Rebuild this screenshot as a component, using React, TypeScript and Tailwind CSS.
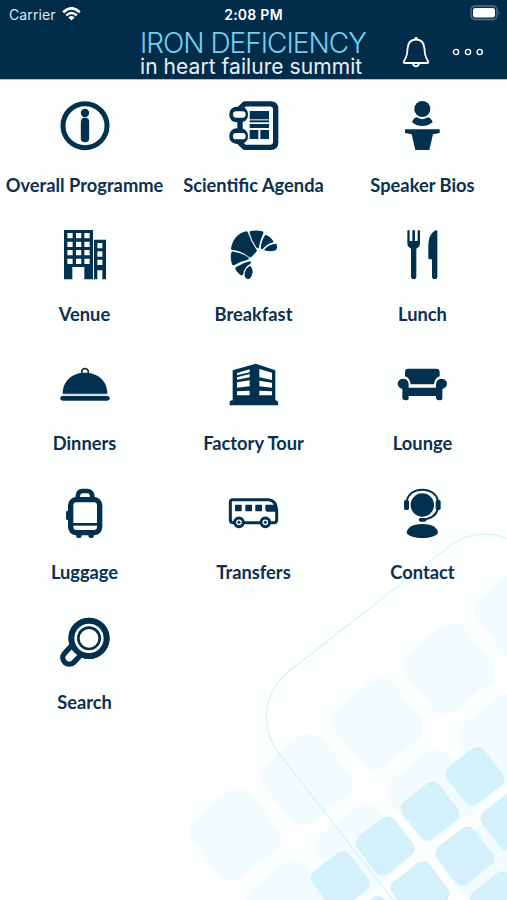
import type { ReactNode } from "react";

const NAVY = "#02304f";

function InfoIcon() {
  return (
    <>
      <circle cx="78" cy="74" r="66" fill="none" stroke={NAVY} strokeWidth="15" />
      <circle cx="78" cy="36" r="12.5" />
      <rect x="65.5" y="50" width="25" height="74" rx="12" />
    </>
  );
}

function AgendaIcon() {
  return (
    <>
      <path d="M50 8.500H128Q143 8.500 143 24V124Q143 139 128 139H50L36 126V22Z" fill="none" stroke={NAVY} strokeWidth="16" strokeLinejoin="round" />
      <rect x="4" y="17" width="56" height="47" rx="22" />
      <rect x="4" y="82" width="56" height="47" rx="22" />
      <rect x="15" y="31" width="38" height="19" rx="9.500" fill="#fff" />
      <rect x="15" y="96" width="38" height="19" rx="9.500" fill="#fff" />
      <rect x="65" y="30" width="58" height="25" />
      <rect x="65" y="58" width="58" height="6" />
      <rect x="65" y="69" width="58" height="12" />
      <rect x="65" y="87" width="26" height="27" />
      <rect x="97" y="87" width="26" height="27" />
    </>
  );
}

function SpeakerIcon() {
  return (
    <>
      <circle cx="76" cy="24" r="24" />
      <path d="M45 63Q50 51 59 49Q76 60 93 49Q102 51 107 63Q94 75 76 75Q57 75 45 63Z" />
      <path d="M24 85H128V96L108 100L97 147H55L44 100L24 96Z" />
    </>
  );
}

function VenueIcon() {
  return (
    <>
      <path fillRule="evenodd" d="M15 0H102V148H76V111H40V148H15ZM25 9V25H41V9ZM51 9V25H67V9ZM76 9V25H92V9ZM25 35V51H41V35ZM51 35V51H67V35ZM76 35V51H92V35ZM25 60V76H41V60ZM51 60V76H67V60ZM76 60V76H92V60ZM25 86V102H41V86ZM51 86V102H67V86ZM76 86V102H92V86Z" />
      <path fillRule="evenodd" d="M105 29H141V148H130V121H115V148H105ZM115 39V55H130V39ZM115 64V80H130V64ZM115 89V105H130V89Z" />
    </>
  );
}

function CroissantIcon() {
  return (
    <>
      <path d="M9 55Q17 13 54 4Q59 4 61 10Q69 37 85 58Q88 63 84 67L70 81Q65 84 60 79Q38 62 13 60Q8 60 9 55Z" />
      <path d="M68 3Q86-1 103 4Q108 6 105 13Q96 30 93 51Q91 58 86 53Q70 31 65 9Q64 4 68 3Z" />
      <path d="M112 14Q131 20 137 37Q118 40 104 57Q98 60 98 53Q101 30 112 14Z" />
      <path d="M108 60Q123 41 145 41Q150 53 143 61Q126 67 108 60Z" />
      <path d="M10 68Q10 64 16 65Q42 68 61 82Q65 87 59 89Q36 94 18 106Q13 107 12 102Q6 85 10 68Z" />
      <path d="M23 112Q44 98 66 94Q71 95 67 101Q48 112 46 132Q43 139 36 134Q24 123 22 116Z" />
      <path d="M50 138Q48 118 66 107Q73 112 74 126Q71 142 63 147Q53 148 50 138Z" />
    </>
  );
}

function CutleryIcon() {
  return (
    <>
      <path d="M31 4Q31 0 34.500 0T38 4V33H46V4Q46 0 50 0T54 4V33H62V4Q62 0 65.500 0T69 4V40Q69 51 58 56V140Q58 147 50 147T42 140V56Q31 51 31 40Z" />
      <path d="M121 4Q121-1 116 1C98 10 94 30 94 50V84Q94 88 98 88H105V140Q105 147 113 147T121 140Z" />
    </>
  );
}

function ClocheIcon() {
  return (
    <>
      <circle cx="78" cy="36" r="10" fill="none" stroke={NAVY} strokeWidth="5" />
      <path d="M11 101C11 62 40 38 78 38S145 62 145 101Z" />
      <rect x="11" y="103" width="134" height="3" opacity=".3" />
      <rect x="4" y="108" width="148" height="14" rx="7" />
    </>
  );
}

function FactoryIcon() {
  return (
    <path
      fillRule="evenodd"
      d="M14 31L83 11L142 31V121Q150 121 150 128V136H5V128Q5 121 14 121ZM27 39V46L65 37V28ZM27 52V59L65 52V42ZM27 67V83L65 79V61ZM27 94V106H65V92ZM94 27V52L132 60V38ZM94 62V79L132 83V68ZM94 92V106H132V94Z"
    />
  );
}

function SofaIcon() {
  return (
    <>
      <path d="M34 26H118Q128 26 128 36V49Q113 53 111 73H41Q39 53 24 49V36Q24 26 34 26Z" />
      <path d="M18 56Q34 57 35 73V83H117V73Q118 57 134 56Q150 58 150 72Q149 83 136 87V115Q136 121 127 121T117 115V108H35V115Q35 121 26 121T16 115V87Q3 83 2 72Q2 58 18 56Z" />
    </>
  );
}

function LuggageIcon() {
  return (
    <>
      <rect x="35" y="32" width="87" height="99" rx="17" fill="none" stroke={NAVY} strokeWidth="16" />
      <path d="M56 30V24Q57 6 70 6H86Q99 7 100 24V30" fill="none" stroke={NAVY} strokeWidth="14" />
      <rect x="42" y="102" width="72" height="8" />
      <rect x="21" y="65" width="12" height="28" rx="5" />
      <rect x="51" y="133" width="17" height="14" rx="7" />
      <rect x="88" y="133" width="17" height="14" rx="7" />
    </>
  );
}

function BusIcon() {
  return (
    <>
      <path d="M14 32H122Q145 34 146 66V93Q146 101 138 101H14Q7 101 7 94V39Q7 32 14 32Z" fill="none" stroke={NAVY} strokeWidth="9" />
      <rect x="21" y="47" width="20" height="20" rx="2" />
      <rect x="52" y="47" width="20" height="20" rx="2" />
      <rect x="82" y="47" width="20" height="20" rx="2" />
      <path d="M114 47H141L148 68H118Q112 68 112 60V50Z" />
      <circle cx="33" cy="100" r="13" fill="#fff" stroke={NAVY} strokeWidth="9" />
      <circle cx="112" cy="100" r="13" fill="#fff" stroke={NAVY} strokeWidth="9" />
      <circle cx="33" cy="100" r="4.500" />
      <circle cx="112" cy="100" r="4.500" />
    </>
  );
}

function HeadsetIcon() {
  return (
    <>
      <circle cx="76" cy="48" r="35" />
      <path d="M29 36C34 13 53 2 76 2S118 13 123 36M123 58Q116 90 74 92" fill="none" stroke={NAVY} strokeWidth="6" />
      <rect x="21" y="33" width="15" height="30" rx="5" />
      <rect x="116" y="33" width="15" height="30" rx="5" />
      <rect x="65" y="87" width="24" height="11" rx="5.500" />
      <path d="M29 132C29 115 50 105 76 105S123 115 123 132C116 142 99 147 76 147S36 142 29 132Z" />
    </>
  );
}

function SearchIcon() {
  return (
    <>
      <path d="M31 119L58 90" stroke={NAVY} strokeWidth="55" strokeLinecap="round" />
      <circle cx="90" cy="61" r="62" />
      <path d="M31 119L50 99" stroke="#fff" strokeWidth="23" strokeLinecap="round" />
      <circle cx="90" cy="61" r="53" fill="none" stroke={NAVY} strokeWidth="17" />
      <circle cx="90" cy="61" r="44" fill="#fff" />
      <circle cx="90" cy="61" r="32" fill="none" stroke={NAVY} strokeWidth="8" />
    </>
  );
}

const items: { label: string; icon: ReactNode }[] = [
  { label: "Overall Programme", icon: <InfoIcon /> },
  { label: "Scientific Agenda", icon: <AgendaIcon /> },
  { label: "Speaker Bios", icon: <SpeakerIcon /> },
  { label: "Venue", icon: <VenueIcon /> },
  { label: "Breakfast", icon: <CroissantIcon /> },
  { label: "Lunch", icon: <CutleryIcon /> },
  { label: "Dinners", icon: <ClocheIcon /> },
  { label: "Factory Tour", icon: <FactoryIcon /> },
  { label: "Lounge", icon: <SofaIcon /> },
  { label: "Luggage", icon: <LuggageIcon /> },
  { label: "Transfers", icon: <BusIcon /> },
  { label: "Contact", icon: <HeadsetIcon /> },
  { label: "Search", icon: <SearchIcon /> },
];

const range = (n: number) => Array.from({ length: n }, (_, i) => i);

function Backdrop() {
  return (
    <svg className="pointer-events-none absolute inset-0 h-[900px] w-[507px]" viewBox="0 0 507 900" fill="none">
      <g transform="translate(235 835) rotate(-37.9)" fill="#f2fcff">
        {range(3).map((row) =>
          range(5).map((col) => (
            <rect key={`${row}-${col}`} x={col * 90.3 - 37.5} y={row * 90.3 - 37.5} width="75" height="75" rx="17" />
          ))
        )}
      </g>
      <g transform="translate(340.300 880.700) rotate(-37.8)" fill="#d4f1fb">
        {range(4).map((row) =>
          range(4).map((col) => (
            <rect key={`${row}-${col}`} x={col * 56.8 - 23.5} y={row * 56.8 - 23.5} width="47" height="47" rx="8.500" />
          ))
        )}
      </g>
      <rect x="-242.700" y="707" width="320" height="420" rx="59" transform="rotate(-37.9)" stroke="#d2f3f9" strokeWidth="1.200" />
    </svg>
  );
}

function StatusBar() {
  return (
    <div className="grid h-7 grid-cols-3 items-center pl-[9px] pr-[6px]">
      <div className="flex items-center gap-[6px] text-[14px] tracking-[0.1px] text-[#dfe8ee]">
        Carrier
        <svg className="h-[14px] w-[19px]" viewBox="0 0 19 14" fill="none" stroke="#fff" strokeWidth="2.600">
          <path d="M1.200 5.200Q9.500-2.600 17.800 5.200" />
          <path d="M4.200 8.400Q9.500 3.600 14.800 8.400" />
          <path d="M6.400 10.400Q9.500 7.800 12.600 10.400L9.500 13.600Z" fill="#fff" stroke="none" />
        </svg>
      </div>
      <div className="pr-[3px] text-center text-[14px] font-semibold tracking-[0.25px]">2:08 PM</div>
      <svg className="-mt-[2px] h-4 w-[31px] justify-self-end" viewBox="0 0 31 16" fill="none">
        <rect x="1" y="1" width="26" height="13.500" rx="4" stroke="#57738a" strokeWidth="1.300" />
        <rect x="3" y="3" width="22" height="9.500" rx="2.200" fill="#fff" />
        <path d="M28.700 5.500Q30.500 7.700 28.700 10Z" fill="#71889a" />
      </svg>
    </div>
  );
}

function Header() {
  return (
    <header className="h-[79px] bg-[#012d4a] text-white">
      <StatusBar />
      <div className="flex h-[51px] pl-[140px]">
        <div className="w-[228px] whitespace-nowrap pt-[3px]">
          <div className="h-[25px] text-[28px] font-light leading-[25px] tracking-[-1px] text-[#78cdf0]">IRON DEFICIENCY</div>
          <div className="h-[21px] text-[21px] leading-[21px] tracking-[0.06px] text-[#e9f1f6]">in heart failure summit</div>
        </div>
        <svg className="ml-[34px] mt-[9px] h-[31px] w-[28px]" viewBox="0 0 28 31" fill="none" stroke="#fff" strokeWidth="1.800" strokeLinejoin="round">
          <path d="M14 2.500C8.500 2.500 5.800 6.500 5.500 12C5.200 19 4.300 21 2 24Q1 26 3 26H25Q27 26 26 24C23.700 21 22.800 19 22.500 12C22.200 6.500 19.500 2.500 14 2.500Z" />
          <path d="M10.800 26.500Q11.500 29.300 14 29.300T17.200 26.500" />
          <circle cx="14" cy="1.600" r=".8" fill="#fff" />
        </svg>
        <svg className="ml-[22px] mt-[20px] h-2 w-[32px]" viewBox="0 0 32 8" fill="none" stroke="#fff" strokeWidth="1.400">
          <circle cx="4" cy="4" r="2.600" />
          <circle cx="16" cy="4" r="2.600" />
          <circle cx="27.700" cy="4" r="2.600" />
        </svg>
      </div>
    </header>
  );
}

export default function App() {
  return (
    <div className="relative h-[900px] w-[507px] overflow-hidden bg-[#fdfefe] font-['Inter',sans-serif]">
      <Backdrop />
      <Header />
      <main className="relative grid auto-rows-[129.3px] grid-cols-3 border-t border-[#a9c3d0] pt-[21px]">
        {items.map((item) => (
          <div key={item.label} className="flex flex-col items-center">
            <svg className="mr-[2px] h-[50px] w-[50px] shrink-0 overflow-visible" viewBox="0 0 150 150" fill={NAVY}>
              {item.icon}
            </svg>
            <div className="mt-[19.500px] whitespace-nowrap font-['Lato',sans-serif] text-[18.300px] font-bold leading-7 text-[#0c304e]">
              {item.label}
            </div>
          </div>
        ))}
      </main>
    </div>
  );
}
